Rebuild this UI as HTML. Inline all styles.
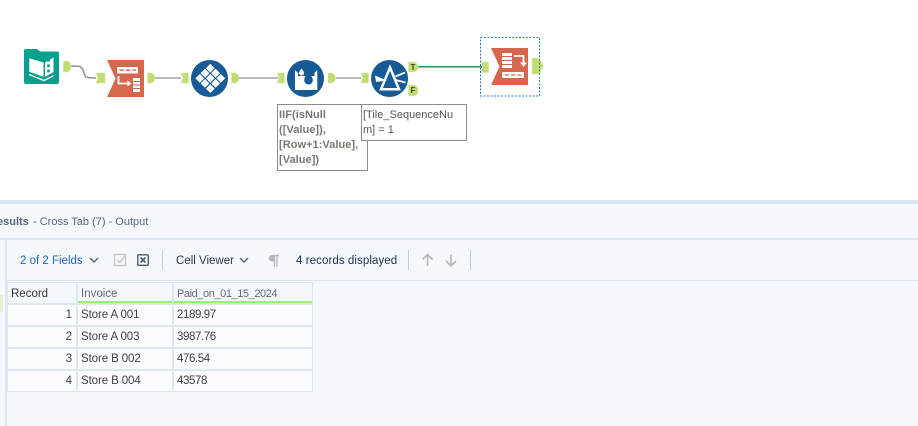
<!DOCTYPE html>
<html><head><meta charset="utf-8"><style>
html,body{margin:0;padding:0}
body{width:918px;height:426px;position:relative;overflow:hidden;background:#f5f8fd;font-family:"Liberation Sans",sans-serif;font-size:11.5px;color:#333}
.a{position:absolute;white-space:nowrap}
.c{position:absolute;background:#fbfcff;height:20px;line-height:20px;box-sizing:border-box;font-size:11.5px;color:#3a3f4a}
.h{background:#f5f8fd;height:18px;line-height:22px}
.s{letter-spacing:-.1px}
.n{letter-spacing:-.4px}
.box{position:absolute;background:#fff;border:1px solid #8c8c8c;box-sizing:border-box;font-size:11px;line-height:15px;color:#7b7672;padding:3px 0 0 1px;font-weight:bold;letter-spacing:.05px}
</style></head><body>
<div class="a" style="left:0;top:0;width:918px;height:200px;background:#fff"></div>
<svg class="a" style="left:0;top:0" width="918" height="200" viewBox="0 0 918 200">
<!-- wires -->
<g fill="none" stroke="#a3a3a3" stroke-width="1.5">
<path d="M71 66C82 66 80 66 83 70C86 78 84 78 96 78" stroke="#8f8f8f"/>
<path d="M155 78H181M239 78H278M336 78H361"/>
</g>
<path d="M418 66.8H482" stroke="#2f9e5f" stroke-width="1.7" fill="none"/>
<!-- anchors -->
<g fill="#c2dc72" stroke="#d8e8a4" stroke-width=".6">
<path d="M63.500 61h3.500a5 5 0 0 1 4 5.500a5 5 0 0 1-4 5.500h-3.500z"/>
<path d="M96 73h9v10h-9l2-5z"/>
<path d="M147.500 73h3.500a5 5 0 0 1 4 5a5 5 0 0 1-4 5h-3.500z"/>
<path d="M181 73h7.500v10h-7.500l2-5z"/>
<path d="M231.500 73h3.500a5 5 0 0 1 4 5a5 5 0 0 1-4 5h-3.500z"/>
<path d="M277 73h7.500v10h-7.500l2-5z"/>
<path d="M328 73h3.500a5 5 0 0 1 4 5a5 5 0 0 1-4 5h-3.500z"/>
<path d="M361 73h7.500v10h-7.500l2-5z"/>
<path d="M408.500 62h5a5 5 0 0 1 4.500 5a5 5 0 0 1-4.500 5h-5z"/>
<path d="M408.500 85h5a5 5 0 0 1 4.500 5.500a5 5 0 0 1-4.500 5.500h-5z"/>
<path d="M481 62h7.500v10.500h-7.500l2-5z"/>
<path d="M532 58h7l4.500 8l-4.500 8h-7z"/>
</g>
<text x="410.500" y="70" font-family="Liberation Sans" font-size="8" font-weight="bold" fill="#3d4a20">T</text>
<text x="410.500" y="93" font-family="Liberation Sans" font-size="8" font-weight="bold" fill="#3d4a20">F</text>
<!-- book -->
<path d="M26 49h11l3 2.500h17a2 2 0 0 1 2 2V82a2 2 0 0 1-2 2H26a2 2 0 0 1-2-2V51a2 2 0 0 1 2-2z" fill="#07a08c"/>
<path d="M29.300 58.300L43.500 62.500V76.700L29.300 71.700zM45 62.500L53.500 57.500V72L45 76.700z" fill="#fff"/>
<path d="M29 74.500L44 80.500L53.500 75.700" fill="none" stroke="#fff" stroke-width="1.400"/>
<g fill="#07a08c"><circle cx="48.500" cy="60.300" r="1.500"/><circle cx="48.500" cy="65.700" r="1.500"/><circle cx="48.500" cy="71" r="1.500"/></g>
<!-- crosstab 1 -->
<path d="M107 60H144V97H107L115.500 78.500z" fill="#d4674c"/>
<rect x="117" y="67" width="21" height="6.500" rx="1" fill="#fff"/>
<path d="M119.500 70.200h4.500M126 70.200h4.500M132.500 70.200h3.500" stroke="#d4674c" stroke-width="1.300"/>
<path d="M118.500 76v7.500h10" fill="none" stroke="#fff" stroke-width="1.800"/>
<path d="M127.500 80.500l4 3l-4 3z" fill="#fff"/>
<rect x="133" y="78" width="7" height="14" fill="#fff"/>
<path d="M133 81.500h7M133 85h7M133 88.500h7" stroke="#d4674c" stroke-width="1"/>
<!-- multi-row circle -->
<circle cx="209.500" cy="78.500" r="18.500" fill="#165a96"/>
<g fill="#fff">
<path d="M210.300 63.800l4.400 4.400-4.400 4.400-4.400-4.400z"/>
<path d="M205 68.800l4.400 4.400-4.400 4.400-4.400-4.400z"/>
<path d="M215.600 68.800l4.400 4.400-4.400 4.400-4.400-4.400z"/>
<path d="M199.800 73.900l4.400 4.400-4.400 4.400-4.400-4.400z"/>
<path d="M210.300 73.900l4.400 4.400-4.400 4.400-4.400-4.400z"/>
<path d="M220.800 73.900l4.400 4.400-4.400 4.400-4.400-4.400z"/>
<path d="M205 79l4.400 4.400-4.400 4.400-4.400-4.400z"/>
<path d="M215.600 79l4.400 4.400-4.400 4.400-4.400-4.400z"/>
<path d="M210.300 84.200l4.400 4.400-4.400 4.400-4.400-4.400z"/>
</g>
<!-- formula circle -->
<circle cx="305.500" cy="78.500" r="18.500" fill="#165a96"/>
<path d="M295 70l3 3V76h16.500V73l2.800-3V90H295z" fill="#fff"/>
<path d="M308.500 72c2.800 3.800 4.300 6 4.300 8.200a4.300 4.300 0 0 1-8.600 0c0-2.200 1.500-4.400 4.300-8.200z" fill="#165a96"/>
<path d="M301.500 68.500c1.700 2.300 2.500 3.400 2.500 4.500a2.500 2.500 0 0 1-5 0c0-1.100.8-2.200 2.500-4.500z" fill="#fff"/>
<!-- filter circle -->
<circle cx="389.500" cy="78.500" r="18.500" fill="#165a96"/>
<path d="M390 67.500L381 89.300h18z" fill="none" stroke="#fff" stroke-width="2.500"/>
<path d="M375 75.500L387 80.500L376 82z" fill="#fff"/>
<path d="M395.500 76.500L405 72.500M395.500 80L405.500 82.500" stroke="#fff" stroke-width="1.800" fill="none"/>
<!-- crosstab output -->
<rect x="480.500" y="37.500" width="59" height="58.500" fill="none" stroke="#2a80c8" stroke-dasharray="2 1.500"/>
<path d="M491 48H528V85H491L499.500 66.500z" fill="#d4674c"/>
<rect x="502" y="53" width="10" height="15" fill="#fff"/>
<path d="M502 56.500h10M502 60.500h10M502 64.500h10" stroke="#d4674c" stroke-width="1"/>
<path d="M514 56h9.500v7" fill="none" stroke="#fff" stroke-width="1.800"/>
<path d="M520 62.500h7l-3.500 4.500z" fill="#fff"/>
<rect x="502" y="72" width="22" height="6" rx="1" fill="#fff"/>
<path d="M504.500 75h4.500M511 75h4.500M517.500 75h4" stroke="#d4674c" stroke-width="1.300"/>
</svg>
<!-- annotations -->
<div class="box" style="left:277px;top:104px;width:91px;height:67px">IIF(isNull<br>([Value]),<br>[Row+1:Value],<br>[Value])</div>
<div class="box" style="left:361px;top:104px;width:106px;height:37px;color:#555;font-weight:normal;font-size:11px;letter-spacing:0">[Tile_SequenceNu<br>m] = 1</div>
<!-- panel chrome -->
<div class="a" style="left:0;top:200px;width:918px;height:4px;background:#dfe6f3"></div>
<div class="a" style="left:0;top:238px;width:918px;height:2px;background:#dfe6f3"></div>
<div class="a" style="left:5px;top:240px;width:2px;height:186px;background:#dfe6f3"></div>
<div class="a" style="left:7px;top:280px;width:911px;height:1px;background:#dfe6f3"></div>
<div class="a" style="left:0;top:295px;width:3px;height:17px;background:#e3efd0"></div>
<div class="a" style="left:-3px;top:215px;line-height:14px;font-size:11px;color:#59657a"><b>esults</b></div>
<div class="a" style="left:33px;top:215px;line-height:14px;font-size:11px;color:#59657a">- Cross Tab (7) - Output</div>
<!-- toolbar -->
<div class="a" style="left:20px;top:254px;line-height:14px;font-size:11.500px;color:#2466b8">2 of 2 Fields</div>
<div class="a" style="left:176px;top:254px;line-height:14px;font-size:11.500px;color:#2e3648">Cell Viewer</div>
<div class="a" style="left:296px;top:254px;line-height:14px;font-size:11.500px;letter-spacing:.08px;color:#1f2c54">4 records displayed</div>
<svg class="a" style="left:0;top:240px" width="500" height="40" viewBox="0 240 500 40">
<g fill="none" stroke="#59657a" stroke-width="1.400">
<path d="M90 258l4 4 4-4M240 258l4 4 4-4"/>
</g>
<rect x="114.500" y="254.500" width="11" height="11" fill="none" stroke="#c3c7cc" stroke-width="1.300"/>
<path d="M117 260l2.500 2.500 6-7" fill="none" stroke="#c3c7cc" stroke-width="1.300"/>
<rect x="137.800" y="254.800" width="10.500" height="10.500" rx="1" fill="none" stroke="#4c5a70" stroke-width="1.400"/>
<path d="M140.500 257.500l5 5M145.500 257.500l-5 5" stroke="#4c5a70" stroke-width="1.600"/>
<path d="M162.500 250v20M408.500 250v20M470.500 250v20" stroke="#c5ccd8"/>
<path d="M274.500 255.500H279M274.500 255.500v11M277 255.500v11" stroke="#b4b8bc" stroke-width="1.300" fill="none"/>
<path d="M274.500 255h-2.500a3 3 0 0 0 0 6.500h2.500z" fill="#b4b8bc"/>
<path d="M427.500 266v-11.500M422.500 259.500l5-5 5 5M451 254.500V266M446 261l5 5 5-5" fill="none" stroke="#b4b8bc" stroke-width="1.600"/>
</svg>
<!-- table -->
<div class="a" style="left:7px;top:282px;width:306px;height:110px;background:#dfe6f3"></div>
<div class="c h" style="left:8px;top:283px;width:68px;height:20px;padding-left:3px;color:#333">Record</div>
<div class="c h" style="left:78px;top:283px;width:94px;padding-left:3px;color:#5f6a7e">Invoice</div>
<div class="c h" style="left:174px;top:283px;width:138px;padding-left:3px;color:#5f6a7e;font-size:11px;letter-spacing:-.42px">Paid_on_01_15_2024</div>
<div class="a" style="left:78px;top:301px;width:94px;height:2px;background:#9cf07a"></div>
<div class="a" style="left:174px;top:301px;width:138px;height:2px;background:#9cf07a"></div>

<div class="c" style="left:8px;top:305px;width:68px;text-align:right;padding-right:4px">1</div>
<div class="c s" style="left:78px;top:305px;width:94px;padding-left:3px">Store A 001</div>
<div class="c n" style="left:174px;top:305px;width:138px;padding-left:3px">2189.97</div>

<div class="c" style="left:8px;top:327px;width:68px;text-align:right;padding-right:4px">2</div>
<div class="c s" style="left:78px;top:327px;width:94px;padding-left:3px">Store A 003</div>
<div class="c n" style="left:174px;top:327px;width:138px;padding-left:3px">3987.76</div>

<div class="c" style="left:8px;top:349px;width:68px;text-align:right;padding-right:4px">3</div>
<div class="c s" style="left:78px;top:349px;width:94px;padding-left:3px">Store B 002</div>
<div class="c n" style="left:174px;top:349px;width:138px;padding-left:3px">476.54</div>

<div class="c" style="left:8px;top:371px;width:68px;text-align:right;padding-right:4px">4</div>
<div class="c s" style="left:78px;top:371px;width:94px;padding-left:3px">Store B 004</div>
<div class="c n" style="left:174px;top:371px;width:138px;padding-left:3px">43578</div>
</body></html>
